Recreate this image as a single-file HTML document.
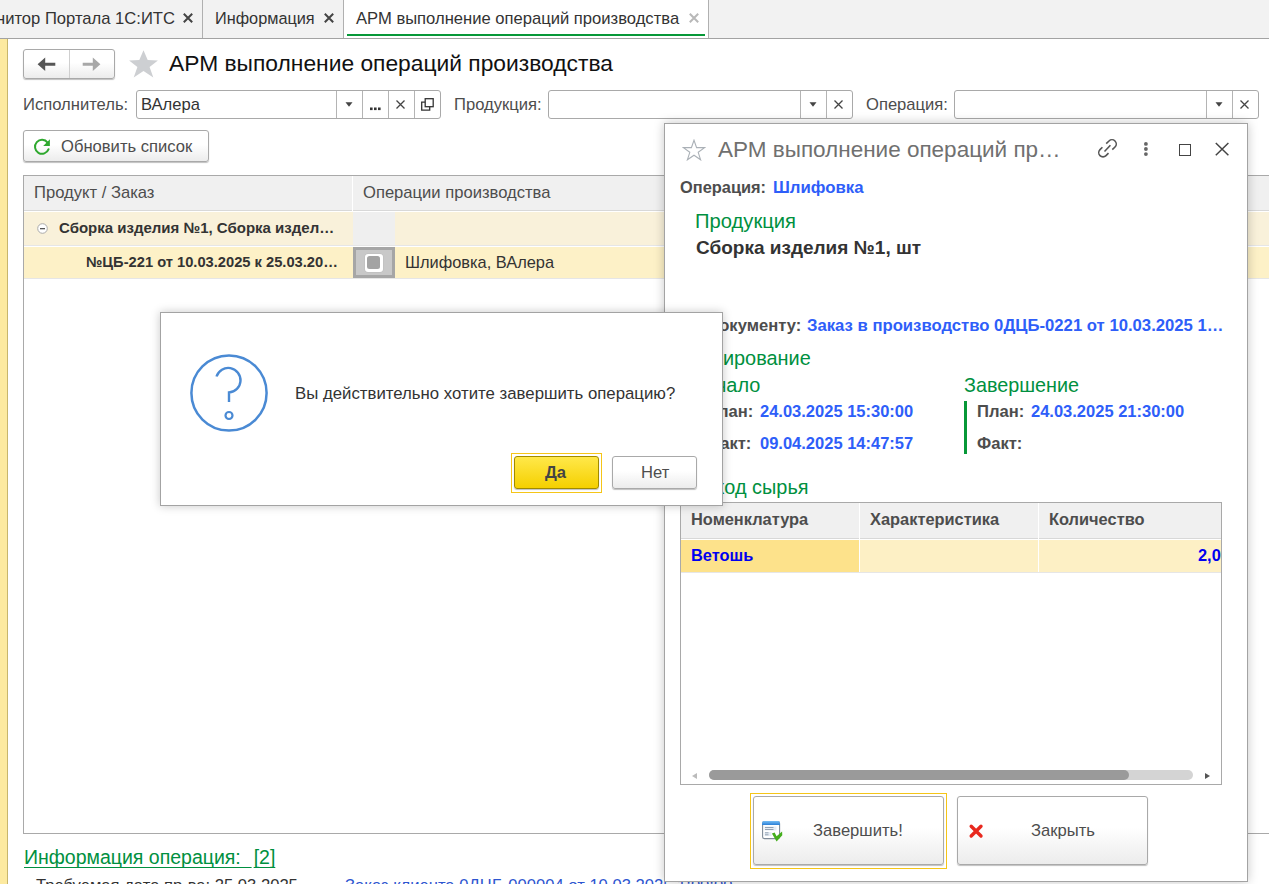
<!DOCTYPE html>
<html><head><meta charset="utf-8">
<style>
*{box-sizing:border-box;margin:0;padding:0}
html,body{width:1269px;height:884px;overflow:hidden;background:#fff;font-family:"Liberation Sans",sans-serif;color:#4d4d4d;position:relative}
.a{position:absolute;white-space:nowrap}
.t{font-size:16.6px;line-height:19px}
.b{font-weight:bold}
.btn{position:absolute;border:1px solid #a9a9a9;border-radius:3px;background:linear-gradient(#ffffff 0%,#ffffff 45%,#ececec 100%);box-shadow:0 1px 1px rgba(0,0,0,.25)}
.fld{position:absolute;border:1px solid #a9a9a9;border-radius:3px;background:#fff}
.sep{position:absolute;top:0;bottom:0;width:1px;background:#b4b4b4}
.green{color:#009040}
.blue{color:#2e5ef9}
</style></head><body>

<!-- TAB BAR -->
<div class="a" style="left:0;top:0;width:1269px;height:38px;background:#f2f2f2;border-bottom:1px solid #a3a3a3;height:39px"></div>
<div class="a t" style="left:-4px;top:9px;color:#333">нитор Портала 1С:ИТС</div>
<svg class="a" style="left:183px;top:13px" width="10" height="10" viewBox="0 0 10 10"><path d="M0.8 0.8 L9.2 9.2 M9.2 0.8 L0.8 9.2" stroke="#444" stroke-width="2"/></svg>
<div class="a" style="left:202px;top:0;width:1px;height:38px;background:#b0b0b0"></div>
<div class="a" style="left:215px;top:9px;font-size:16.3px;line-height:19px;color:#333">Информация</div>
<svg class="a" style="left:324px;top:13px" width="10" height="10" viewBox="0 0 10 10"><path d="M0.8 0.8 L9.2 9.2 M9.2 0.8 L0.8 9.2" stroke="#444" stroke-width="2"/></svg>
<div class="a" style="left:343px;top:0;width:1px;height:38px;background:#b0b0b0"></div>
<div class="a" style="left:344px;top:0;width:364px;height:38px;background:#fff"></div>
<div class="a t" style="left:356px;top:9px;color:#333">АРМ выполнение операций производства</div>
<svg class="a" style="left:689px;top:13px" width="10" height="10" viewBox="0 0 10 10"><path d="M0.8 0.8 L9.2 9.2 M9.2 0.8 L0.8 9.2" stroke="#b8b8b8" stroke-width="2"/></svg>
<div class="a" style="left:347px;top:34px;width:358px;height:2px;background:#079838"></div>
<div class="a" style="left:708px;top:0;width:1px;height:38px;background:#b0b0b0"></div>

<!-- left strip -->
<div class="a" style="left:0;top:39px;width:8px;height:845px;background:#fdeaa0;border-right:1px solid #c8b66c"></div>

<!-- nav buttons -->
<div class="btn" style="left:23px;top:49px;width:92px;height:30px"></div>
<div class="a" style="left:69px;top:50px;width:1px;height:28px;background:#cfcfcf"></div>
<svg class="a" style="left:37px;top:57px" width="19" height="14" viewBox="0 0 19 14"><path d="M0.6 7.2 L8.2 0.6 L8.2 5.7 L18.3 5.7 L18.3 8.8 L8.2 8.8 L8.2 13.9 Z" fill="#555"/></svg>
<svg class="a" style="left:82px;top:57px" width="19" height="14" viewBox="0 0 19 14"><path d="M18.4 7.2 L10.8 0.6 L10.8 5.7 L0.7 5.7 L0.7 8.8 L10.8 8.8 L10.8 13.9 Z" fill="#a8a8a8"/></svg>
<svg class="a" style="left:128px;top:49px" width="31" height="30" viewBox="0 0 31 30"><path d="M15.5 1.3 L19.7 10.9 L29.9 11.5 L21.6 18 L25.3 28.4 L15.5 22 L5.7 28.4 L9.4 18 L1.1 11.5 L11.3 10.9 Z" fill="#cdcfd2"/></svg>
<div class="a" style="left:169px;top:50px;font-size:22.8px;line-height:27px;color:#111">АРМ выполнение операций производства</div>

<!-- filter row -->
<div class="a t" style="left:23px;top:95px">Исполнитель:</div>
<div class="fld" style="left:136px;top:90px;width:305px;height:29px">
  <div class="a t" style="left:4px;top:4px;color:#333">ВАлера</div>
  <div class="sep" style="left:199px"></div>
  <div class="sep" style="left:225px"></div>
  <div class="sep" style="left:251px"></div>
  <div class="sep" style="left:277px"></div>
  <svg class="a" style="left:208px;top:11px" width="8" height="5" viewBox="0 0 8 5"><path d="M0.5 0.3 L7.5 0.3 L4 4.8 Z" fill="#444"/></svg>
  <svg class="a" style="left:233px;top:16px" width="11" height="4" viewBox="0 0 11 4"><rect x="0" y="0.5" width="2.6" height="2.6" fill="#333"/><rect x="4" y="0.5" width="2.6" height="2.6" fill="#333"/><rect x="8" y="0.5" width="2.6" height="2.6" fill="#333"/></svg>
  <svg class="a" style="left:259px;top:9px" width="9" height="9" viewBox="0 0 9 9"><path d="M0.5 0.5 L8.5 8.5 M8.5 0.5 L0.5 8.5" stroke="#444" stroke-width="1.3"/></svg>
  <svg class="a" style="left:284px;top:7px" width="13" height="13" viewBox="0 0 13 13"><rect x="4.2" y="0.7" width="8" height="8" fill="none" stroke="#333" stroke-width="1.3"/><path d="M4.2 4.2 H0.7 V12.2 H8.7 V8.7" fill="none" stroke="#333" stroke-width="1.3"/></svg>
</div>

<div class="a t" style="left:454px;top:95px">Продукция:</div>
<div class="fld" style="left:548px;top:90px;width:305px;height:29px">
  <div class="sep" style="left:251px"></div>
  <div class="sep" style="left:277px"></div>
  <svg class="a" style="left:260px;top:11px" width="8" height="5" viewBox="0 0 8 5"><path d="M0.5 0.3 L7.5 0.3 L4 4.8 Z" fill="#444"/></svg>
  <svg class="a" style="left:285px;top:9px" width="9" height="9" viewBox="0 0 9 9"><path d="M0.5 0.5 L8.5 8.5 M8.5 0.5 L0.5 8.5" stroke="#444" stroke-width="1.3"/></svg>
</div>
<div class="a t" style="left:866px;top:95px">Операция:</div>
<div class="fld" style="left:954px;top:90px;width:305px;height:29px">
  <div class="sep" style="left:251px"></div>
  <div class="sep" style="left:277px"></div>
  <svg class="a" style="left:260px;top:11px" width="8" height="5" viewBox="0 0 8 5"><path d="M0.5 0.3 L7.5 0.3 L4 4.8 Z" fill="#444"/></svg>
  <svg class="a" style="left:285px;top:9px" width="9" height="9" viewBox="0 0 9 9"><path d="M0.5 0.5 L8.5 8.5 M8.5 0.5 L0.5 8.5" stroke="#444" stroke-width="1.3"/></svg>
</div>

<!-- refresh button -->
<div class="btn" style="left:23px;top:130px;width:186px;height:32px"></div>
<svg class="a" style="left:33px;top:138px" width="18" height="18" viewBox="0 0 18 18"><path d="M15.6 11.2 A7 7 0 1 1 14.6 4.6" fill="none" stroke="#2ea82e" stroke-width="2" stroke-linecap="round"/><path d="M16.9 1.2 L16.9 7.9 L10.2 7.9 Z" fill="#2ea82e"/></svg>
<div class="a t" style="left:61px;top:137px;color:#4d4d4d">Обновить список</div>

<!-- main table -->
<div class="a" style="left:23px;top:175px;width:1260px;height:659px;border:1px solid #a9a9a9;background:#fff"></div>
<div class="a" style="left:24px;top:176px;width:1245px;height:35px;background:#f0f0f0;border-bottom:1px solid #d8d8d8"></div>
<div class="a" style="left:352px;top:176px;width:1px;height:35px;background:#fff"></div>
<div class="a t" style="left:34px;top:183px">Продукт / Заказ</div>
<div class="a t" style="left:363px;top:183px">Операции производства</div>
<div class="a" style="left:24px;top:212px;width:1245px;height:34px;background:#f9f1da;border-bottom:1px solid #e6e6e6"></div>
<div class="a" style="left:353px;top:212px;width:42px;height:33px;background:#efefef"></div>
<svg class="a" style="left:37px;top:223px" width="11" height="11" viewBox="0 0 11 11"><circle cx="5.5" cy="5.5" r="4.8" fill="#fff" stroke="#aaa" stroke-width="1"/><rect x="3" y="5" width="5" height="1.3" fill="#555"/></svg>
<div class="a b" style="left:59px;top:219px;font-size:15px;line-height:18px;color:#333">Сборка изделия №1, Сборка издел…</div>
<div class="a" style="left:24px;top:247px;width:1245px;height:32px;background:#fdf1c7;border-bottom:1px solid #e6e6e6"></div>
<div class="a b" style="left:86px;top:253px;font-size:14.7px;line-height:18px;color:#333">№ЦБ-221 от 10.03.2025 к 25.03.20…</div>
<div class="a" style="left:353px;top:247px;width:42px;height:31px;background:#c8c8c8;border:3px solid #a6a6a6"></div>
<div class="a" style="left:364.5px;top:253.5px;width:18px;height:18px;background:#fff;border-radius:3px;box-shadow:0 0 0 0.5px #bbb"></div>
<div class="a" style="left:367px;top:256px;width:13px;height:13px;background:#a3a3a3;border-radius:2.5px"></div>
<div class="a" style="left:405px;top:253px;font-size:16.4px;line-height:19px;color:#333">Шлифовка, ВАлера</div>

<!-- bottom info -->
<div class="a green" style="left:24px;top:846px;font-size:19.5px;line-height:23px;text-decoration:underline;text-decoration-skip-ink:none;text-decoration-thickness:1.2px;text-underline-offset:2.5px">Информация операция:&nbsp; <span style="margin-left:2px">[2]</span></div>
<div class="a t" style="left:36px;top:876px;color:#333">Требуемая дата пр-ва: 25.03.2025</div>
<div class="a t blue" style="left:345px;top:876px;color:#2d55d0">Заказ клиента 0ДЦБ-000004 от 10.03.2025 1:00:00</div>


<!-- MODAL -->
<div class="a" style="left:664px;top:123px;width:584px;height:759px;background:#fff;border:1px solid #a3a3a3;box-shadow:0 0 10px rgba(0,0,0,.22)"></div>
<svg class="a" style="left:682px;top:139px" width="24" height="22" viewBox="0 0 24 22"><path d="M12 1.2 L14.6 8.6 L22.6 8.6 L16.2 13.3 L18.6 20.8 L12 16.2 L5.4 20.8 L7.8 13.3 L1.4 8.6 L9.4 8.6 Z" fill="none" stroke="#aab0b6" stroke-width="1.1"/></svg>
<div class="a" style="left:718px;top:136px;font-size:22.5px;line-height:27px;color:#707070">АРМ выполнение операций пр…</div>
<svg class="a" style="left:1092px;top:134px" width="30" height="30" viewBox="0 0 30 30"><g fill="none" stroke="#555" stroke-width="1.6" stroke-linecap="butt"><path d="M14.2 9.7 L17 7 A4.24 4.24 0 0 1 23 13 L20.3 15.6"/><path d="M10.4 13.2 L8 15.6 A4.24 4.24 0 0 0 14 21.6 L16.5 19.1"/><path d="M12.5 17.5 L18.4 11.3"/></g></svg>
<svg class="a" style="left:1142px;top:139px" width="8" height="21" viewBox="0 0 8 21"><circle cx="3.9" cy="4.9" r="1.9" fill="#666"/><circle cx="3.9" cy="10" r="1.9" fill="#666"/><circle cx="3.9" cy="15.1" r="1.9" fill="#666"/></svg>
<div class="a" style="left:1179px;top:144px;width:11.5px;height:11.5px;border:1.5px solid #444"></div>
<svg class="a" style="left:1214px;top:141px" width="16" height="16" viewBox="0 0 16 16"><path d="M1.8 2 L14.4 14.2 M14.4 2 L1.8 14.2" stroke="#444" stroke-width="1.5"/></svg>

<div class="a b" style="left:680px;top:178px;font-size:16.4px;line-height:19px;color:#4d4d4d">Операция:</div>
<div class="a b blue" style="left:773px;top:178px;font-size:16.8px;line-height:19px">Шлифовка</div>
<div class="a green" style="left:695px;top:210px;font-size:20.2px;line-height:23px">Продукция</div>
<div class="a b" style="left:696px;top:237px;font-size:19px;line-height:22px;color:#333">Сборка изделия №1, шт</div>

<div class="a b" style="left:682px;top:316px;font-size:16.6px;line-height:19px;color:#4d4d4d">По документу:</div>
<div class="a b blue" style="left:807px;top:316px;font-size:16.7px;line-height:19px">Заказ в производство 0ДЦБ-0221 от 10.03.2025 1…</div>

<div class="a green" style="left:675px;top:347px;font-size:19.9px;line-height:23px">Планирование</div>
<div class="a green" style="left:691px;top:374px;font-size:19.9px;line-height:23px">Начало</div>
<div class="a" style="left:692px;top:401px;width:3px;height:53px;background:#079838"></div>
<div class="a b" style="left:706px;top:402px;font-size:16.6px;line-height:19px;color:#4d4d4d">План:</div>
<div class="a b blue" style="left:760px;top:402px;font-size:16.5px;line-height:19px">24.03.2025 15:30:00</div>
<div class="a b" style="left:706px;top:434px;font-size:16.6px;line-height:19px;color:#4d4d4d">Факт:</div>
<div class="a b blue" style="left:760px;top:434px;font-size:16.5px;line-height:19px">09.04.2025 14:47:57</div>

<div class="a green" style="left:964px;top:374px;font-size:19.8px;line-height:23px">Завершение</div>
<div class="a" style="left:964px;top:401px;width:3px;height:53px;background:#079838"></div>
<div class="a b" style="left:977px;top:402px;font-size:16.6px;line-height:19px;color:#4d4d4d">План:</div>
<div class="a b blue" style="left:1031px;top:402px;font-size:16.5px;line-height:19px">24.03.2025 21:30:00</div>
<div class="a b" style="left:977px;top:434px;font-size:16.6px;line-height:19px;color:#4d4d4d">Факт:</div>

<div class="a green" style="left:681px;top:476px;font-size:19.9px;line-height:23px">Расход сырья</div>

<!-- inner table -->
<div class="a" style="left:680px;top:502px;width:542px;height:283px;border:1px solid #a9a9a9;background:#fff;overflow:hidden">
  <div class="a" style="left:0;top:0;width:540px;height:36px;background:#f0f0f0;border-bottom:1px solid #d8d8d8"></div>
  <div class="a" style="left:178px;top:0;width:1px;height:36px;background:#fff"></div>
  <div class="a" style="left:357px;top:0;width:1px;height:36px;background:#fff"></div>
  <div class="a b" style="left:10px;top:7px;font-size:16.4px;line-height:19px;color:#4d4d4d">Номенклатура</div>
  <div class="a b" style="left:189px;top:7px;font-size:16.4px;line-height:19px;color:#4d4d4d">Характеристика</div>
  <div class="a b" style="left:368px;top:7px;font-size:16.4px;line-height:19px;color:#4d4d4d">Количество</div>
  <div class="a" style="left:0;top:37px;width:540px;height:33px;background:#fdf0c5;border-bottom:1px solid #e6e6e6"></div>
  <div class="a" style="left:0;top:37px;width:178px;height:32px;background:#fde28b"></div>
  <div class="a" style="left:178px;top:37px;width:1px;height:32px;background:#fff"></div>
  <div class="a" style="left:357px;top:37px;width:1px;height:32px;background:#fff"></div>
  <div class="a b" style="left:10px;top:43px;font-size:16.4px;line-height:19px;color:#0000f0">Ветошь</div>
  <div class="a b" style="left:517px;top:43px;font-size:16.4px;line-height:19px;color:#0000f0">2,0</div>
  <svg class="a" style="left:10px;top:268.5px" width="8" height="8" viewBox="0 0 8 8"><path d="M1 4 L6 1 L6 7 Z" fill="#bbb"/></svg>
  <div class="a" style="left:28px;top:267px;width:484px;height:10px;border-radius:5px;background:#d4d4d4"></div>
  <div class="a" style="left:28px;top:267px;width:420px;height:10px;border-radius:5px;background:#9a9a9a"></div>
  <svg class="a" style="left:522px;top:268.5px" width="8" height="8" viewBox="0 0 8 8"><path d="M7 4 L2 1 L2 7 Z" fill="#555"/></svg>
</div>

<!-- modal buttons -->
<div class="a" style="left:750px;top:793px;width:197px;height:76px;border:1px solid #f5c518"></div>
<div class="btn" style="left:753px;top:796px;width:191px;height:69px"></div>
<svg class="a" style="left:762px;top:821px" width="22" height="22" viewBox="0 0 22 22"><defs><linearGradient id="tb" x1="0" y1="0" x2="0" y2="1"><stop offset="0" stop-color="#74bdf5"/><stop offset="1" stop-color="#2a7fd6"/></linearGradient></defs><rect x="0.6" y="0.6" width="17" height="17" rx="1.8" fill="#fff" stroke="#7f8b98" stroke-width="1.1"/><path d="M0 2.2 Q0 0 2.2 0 H15.8 Q18 0 18 2.2 V4 H0 Z" fill="url(#tb)"/><rect x="2.5" y="5.5" width="12" height="4" fill="#e6edf5"/><rect x="2.5" y="11" width="7" height="4" fill="#e6edf5"/><path d="M3 6.5 H11.5 M3 8.5 H11.5 M3 11.8 H6.5 M3 13.8 H6.5" stroke="#8a9aab" stroke-width="0.9"/><path d="M9.9 12.4 L12.6 11.6 L14.6 15.2 L20.1 10.6 L20.3 14.2 L14.6 20.4 Z" fill="#44ae1c"/></svg>
<div class="a t" style="left:813px;top:821px;color:#4d4d4d">Завершить!</div>
<div class="btn" style="left:957px;top:796px;width:191px;height:69px"></div>
<svg class="a" style="left:968px;top:823px" width="16" height="16" viewBox="0 0 16 16"><path d="M3.2 3.2 L13 13 M13 3.2 L3.2 13" stroke="#e8281e" stroke-width="3.4" stroke-linecap="round"/></svg>
<div class="a t" style="left:1031px;top:821px;color:#4d4d4d">Закрыть</div>

<!-- DIALOG -->
<div class="a" style="left:160px;top:312px;width:563px;height:194px;background:#fff;border:1px solid #a3a3a3;box-shadow:0 0 9px rgba(0,0,0,.22)"></div>
<svg class="a" style="left:189px;top:353px" width="80" height="80" viewBox="0 0 80 80"><circle cx="40" cy="40" r="37.6" fill="none" stroke="#4a8ad4" stroke-width="2.5"/><path d="M27.5 23.5 A12.3 12.3 0 1 1 40 39.5 L40 49" fill="none" stroke="#4a8ad4" stroke-width="2.4"/><circle cx="40" cy="62.5" r="3.5" fill="none" stroke="#4a8ad4" stroke-width="2.2"/></svg>
<div class="a" style="left:295px;top:384px;font-size:16.8px;line-height:19px;color:#333">Вы действительно хотите завершить операцию?</div>
<div class="a" style="left:511px;top:453px;width:91px;height:40px;border:1px solid #f5c518"></div>
<div class="a" style="left:514px;top:456px;width:85px;height:33px;border:1px solid #a08a00;border-radius:3px;background:linear-gradient(#ffe84a,#f5d000);box-shadow:0 1px 1px rgba(0,0,0,.25)"></div>
<div class="a b t" style="left:545px;top:463px;color:#444">Да</div>
<div class="btn" style="left:612px;top:456px;width:85px;height:33px"></div>
<div class="a t" style="left:641px;top:463px;color:#4d4d4d">Нет</div>

</body></html>
